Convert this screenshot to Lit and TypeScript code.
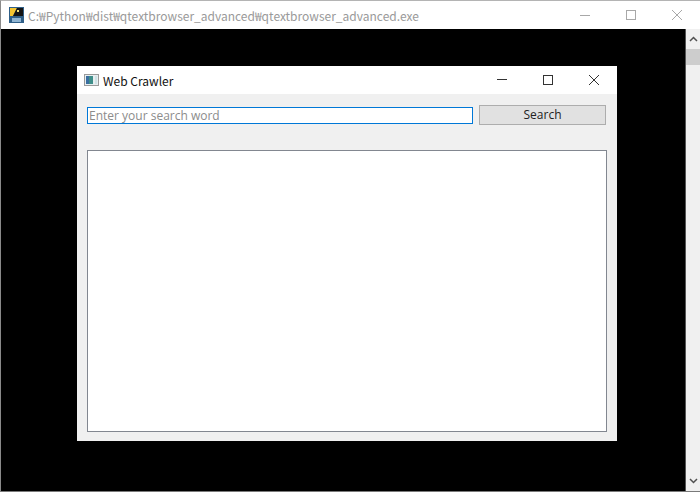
import { LitElement, html, css } from "lit";
import { customElement } from "lit/decorators.js";

@customElement("app-root")
export class AppRoot extends LitElement {
  static styles = css`
    :host {
      display: block;
      width: 700px;
      height: 492px;
      font-family: "Noto Sans CJK KR", "Noto Sans", sans-serif;
    }
    .console {
      box-sizing: border-box;
      width: 700px;
      height: 492px;
      display: flex;
      flex-direction: column;
      background: #fff;
      border-top: 1px solid #b4b4b4;
      border-bottom: 1px solid #7a7a7a;
      border-left: 1px solid #8a8a8a;
    }
    .titlebar {
      height: 28px;
      flex: none;
      display: flex;
      align-items: center;
      background: #fff;
    }
    .app-icon { margin-left: 8px; flex: none; }
    .path {
      margin-left: 4px;
      font-size: 12px;
      color: #9a9a9a;
      white-space: nowrap;
      flex: 1;
    }
    .controls { display: flex; flex: none; }
    .ctl {
      width: 46px;
      height: 28px;
      display: flex;
      align-items: center;
      justify-content: center;
    }
    .content { flex: 1; display: flex; min-height: 0; }
    .canvas { flex: 1; background: #000; position: relative; border-right: 1px solid #555; }
    .scrollbar {
      width: 14px;
      flex: none;
      background: #f0f0f0;
      display: flex;
      flex-direction: column;
      justify-content: space-between;
    }
    .sb-top { display: flex; flex-direction: column; }
    .sb-btn { height: 20px; display: flex; align-items: center; justify-content: center; }
    .thumb { height: 16px; background: #cdcdcd; }
    .window {
      position: absolute;
      left: 76px;
      top: 37px;
      width: 540px;
      height: 375px;
      display: flex;
      flex-direction: column;
      background: #f0f0f0;
    }
    .win-title {
      height: 28px;
      flex: none;
      background: #fff;
      display: flex;
      align-items: center;
    }
    .win-icon { margin-left: 7px; flex: none; }
    .win-name {
      margin-left: 4px;
      font-size: 12px;
      color: #111;
      flex: 1;
    }
    .win-body {
      flex: 1;
      display: flex;
      flex-direction: column;
      padding: 11px 10px 9px 10px;
      min-height: 0;
    }
    .search-row {
      display: flex;
      align-items: center;
      gap: 6px;
      height: 20px;
      flex: none;
      margin-right: 1px;
    }
    .input {
      box-sizing: border-box;
      width: 386px;
      height: 17px;
      border: 1px solid #0078d7;
      background: #fff;
      color: #8c8c8c;
      font: 12px/15px "Open Sans", "Noto Sans", sans-serif;
      padding-left: 1px;
      white-space: nowrap;
      overflow: hidden;
    }
    .btn {
      box-sizing: border-box;
      width: 127px;
      height: 20px;
      border: 1px solid #adadad;
      background: #e1e1e1;
      color: #222;
      font: 12px/18px "Open Sans", "Noto Sans", sans-serif;
      text-align: center;
    }
    .browser {
      box-sizing: border-box;
      margin-top: 25px;
      flex: 1;
      background: #fff;
      border: 1px solid #828790;
    }
  `;

  render() {
    return html`
      <div class="console">
        <div class="titlebar">
          <svg class="app-icon" width="15" height="16" viewBox="0 0 15 16">
            <rect x="0" y="0" width="15" height="16" fill="#2f5f88" />
            <polygon points="1,1 8,1 4,9 1,9" fill="#f4c430" />
            <polygon points="8,1 14,1 14,9 4,9" fill="#141414" />
            <rect x="8" y="3" width="2" height="2" fill="#f4e27a" />
            <rect x="3" y="11" width="9" height="4" fill="#8fb4d2" />
          </svg>
          <span class="path">C:₩Python₩dist₩qtextbrowser_advanced₩qtextbrowser_advanced.exe</span>
          <div class="controls">
            <div class="ctl">
              <svg width="10" height="10" viewBox="0 0 10 10"><path d="M0 5.5H10" stroke="#a8a8a8" fill="none" /></svg>
            </div>
            <div class="ctl">
              <svg width="10" height="10" viewBox="0 0 10 10"><rect x="0.5" y="0.5" width="9" height="9" stroke="#a8a8a8" fill="none" /></svg>
            </div>
            <div class="ctl">
              <svg width="10" height="10" viewBox="0 0 10 10"><path d="M0 0L10 10M10 0L0 10" stroke="#a8a8a8" fill="none" /></svg>
            </div>
          </div>
        </div>
        <div class="content">
          <div class="canvas">
            <div class="window">
              <div class="win-title">
                <svg class="win-icon" width="15" height="12" viewBox="0 0 15 12">
                  <rect x="0.5" y="0.5" width="14" height="11" fill="#e8eef0" stroke="#9a9a9a" />
                  <rect x="2" y="2" width="7" height="8" fill="#3f8f8a" />
                  <rect x="2" y="2" width="3" height="8" fill="#3a6ea0" />
                  <rect x="11" y="2" width="2" height="8" fill="#cfe3e6" />
                </svg>
                <span class="win-name">Web Crawler</span>
                <div class="controls">
                  <div class="ctl">
                    <svg width="10" height="10" viewBox="0 0 10 10"><path d="M0 4.5H10" stroke="#333" fill="none" /></svg>
                  </div>
                  <div class="ctl">
                    <svg width="10" height="10" viewBox="0 0 10 10"><rect x="0.5" y="0.5" width="9" height="9" stroke="#333" fill="none" /></svg>
                  </div>
                  <div class="ctl">
                    <svg width="10" height="10" viewBox="0 0 10 10"><path d="M0 0L10 10M10 0L0 10" stroke="#333" fill="none" /></svg>
                  </div>
                </div>
              </div>
              <div class="win-body">
                <div class="search-row">
                  <div class="input">Enter your search word</div>
                  <div class="btn">Search</div>
                </div>
                <div class="browser"></div>
              </div>
            </div>
          </div>
          <div class="scrollbar">
            <div class="sb-top">
              <div class="sb-btn">
                <svg width="9" height="6" viewBox="0 0 9 6"><path d="M1 5L4.5 1.5L8 5" stroke="#505050" stroke-width="1.5" fill="none" /></svg>
              </div>
              <div class="thumb"></div>
            </div>
            <div class="sb-btn">
              <svg width="9" height="6" viewBox="0 0 9 6"><path d="M1 1L4.5 4.5L8 1" stroke="#505050" stroke-width="1.5" fill="none" /></svg>
            </div>
          </div>
        </div>
      </div>
    `;
  }
}
